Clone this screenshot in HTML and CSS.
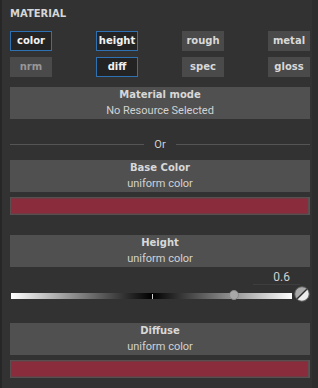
FILE: index.html
```html
<!DOCTYPE html>
<html lang="en">
<head>
  <meta charset="UTF-8">
  <title>Material</title>
  <link rel="stylesheet" href="styles.css">
</head>
<body>
  <div class="panel">
    <div class="content">
      <div class="section-title">MATERIAL</div>

      <div class="channels">
        <div class="channel active">color</div>
        <div class="channel active">height</div>
        <div class="channel">rough</div>
        <div class="channel">metal</div>
        <div class="channel disabled">nrm</div>
        <div class="channel active">diff</div>
        <div class="channel">spec</div>
        <div class="channel">gloss</div>
      </div>

      <div class="block mode">
        <div class="block-title">Material mode</div>
        <div class="block-sub">No Resource Selected</div>
      </div>

      <div class="divider"><span>Or</span></div>

      <div class="block base">
        <div class="block-title">Base Color</div>
        <div class="block-sub">uniform color</div>
      </div>
      <div class="swatch"><div class="swatch-fill"></div></div>

      <div class="block height">
        <div class="block-title">Height</div>
        <div class="block-sub">uniform color</div>
      </div>
      <div class="value-row">
        <div class="value">0.6</div>
      </div>
      <div class="slider-row">
        <div class="slider">
          <div class="slider-tick"></div>
          <div class="slider-knob"></div>
        </div>
        <svg class="invert-icon" width="16" height="16" viewBox="0 0 16 16">
          <circle cx="8" cy="8" r="7.3" fill="#a9a9a9" stroke="#5a5a5a" stroke-width="1"/>
          <path d="M3.2 12.8 L12.8 3.2 A6.8 6.8 0 0 1 3.2 12.8 Z" fill="#ececec"/>
          <line x1="3.2" y1="12.8" x2="12.8" y2="3.2" stroke="#2c2c2c" stroke-width="1.4"/>
        </svg>
      </div>

      <div class="block diffuse">
        <div class="block-title">Diffuse</div>
        <div class="block-sub">uniform color</div>
      </div>
      <div class="swatch"><div class="swatch-fill"></div></div>
    </div>
    <div class="scroll-strip"></div>
  </div>
</body>
</html>
```

FILE: styles.css
```css
body {
  margin: 0;
  background: #323232;
  font-family: 'DejaVu Sans', sans-serif;
}
.panel {
  width: 318px;
  height: 388px;
  display: flex;
  background: #323232;
  border-left: 2px solid #262626;
  box-sizing: border-box;
  overflow: hidden;
}
.content {
  width: 300px;
  padding: 7px 0 0 8px;
}
.scroll-strip {
  margin-left: 2px;
  flex: 1;
  background: #2d2d2d;
}
.section-title {
  font-size: 10px;
  font-weight: bold;
  line-height: 14px;
  color: #d6d6d6;
}
.channels {
  margin-top: 10px;
  display: grid;
  grid-template-columns: repeat(4, 42px);
  justify-content: space-between;
  row-gap: 6px;
}
.channel {
  height: 20px;
  box-sizing: border-box;
  border: 1px solid #4a4a4a;
  background: #4a4a4a;
  color: #d8d8d8;
  font-size: 10px;
  font-weight: bold;
  line-height: 18px;
  text-align: center;
}
.channel.active {
  background: #232323;
  border-color: #2f72b4;
  color: #f2f2f2;
}
.channel.disabled {
  color: #979797;
}
.block {
  background: #505050;
  height: 32px;
  text-align: center;
}
.block-title {
  font-size: 10px;
  font-weight: bold;
  line-height: 16px;
  color: #d8d8d8;
}
.block-sub {
  font-family: 'Roboto', sans-serif;
  font-size: 11px;
  line-height: 16px;
  color: #d2d2d2;
}
.mode {
  margin-top: 10px;
}
.divider {
  margin-top: 18px;
  height: 14px;
  display: flex;
  align-items: center;
  gap: 10px;
  font-family: 'Roboto', sans-serif;
  font-size: 11px;
  color: #cfcfcf;
}
.divider::before,
.divider::after {
  content: '';
  flex: 1;
  height: 1px;
  background: #555;
}
.base {
  margin-top: 9px;
}
.swatch {
  margin-top: 5px;
  height: 18px;
  box-sizing: border-box;
  padding: 2px 3px 2px 2px;
  background: #555;
}
.swatch-fill {
  height: 100%;
  background: #8a2c3b;
  box-shadow: 0 0 1px 1px #6f3a42;
}
.height {
  margin-top: 20px;
}
.value-row {
  margin-top: 4px;
  height: 14px;
  display: flex;
  justify-content: flex-end;
}
.value {
  width: 47px;
  margin-right: 10px;
  border-bottom: 1px solid #3e3e3e;
  box-sizing: border-box;
  font-family: 'Roboto', sans-serif;
  font-size: 12px;
  line-height: 13px;
  color: #d0d0d0;
  text-align: right;
  padding-right: 10px;
}
.slider-row {
  margin-top: 1px;
  height: 16px;
  display: flex;
  align-items: center;
}
.slider {
  position: relative;
  margin: 3px 0 0 1px;
  width: 281px;
  height: 6px;
  background: linear-gradient(to right, #ffffff, #000000 50%, #ffffff);
}
.slider-tick {
  position: absolute;
  left: 141px;
  top: 1px;
  width: 1px;
  height: 5px;
  background: #cfcfcf;
}
.slider-knob {
  position: absolute;
  left: 218px;
  top: -3px;
  width: 10px;
  height: 10px;
  box-sizing: border-box;
  border-radius: 50%;
  background: #a8a8a8;
  border: 1px solid #8a8a8a;
}
.invert-icon {
  margin-left: 2px;
  display: block;
}
.diffuse {
  margin-top: 21px;
}
```
